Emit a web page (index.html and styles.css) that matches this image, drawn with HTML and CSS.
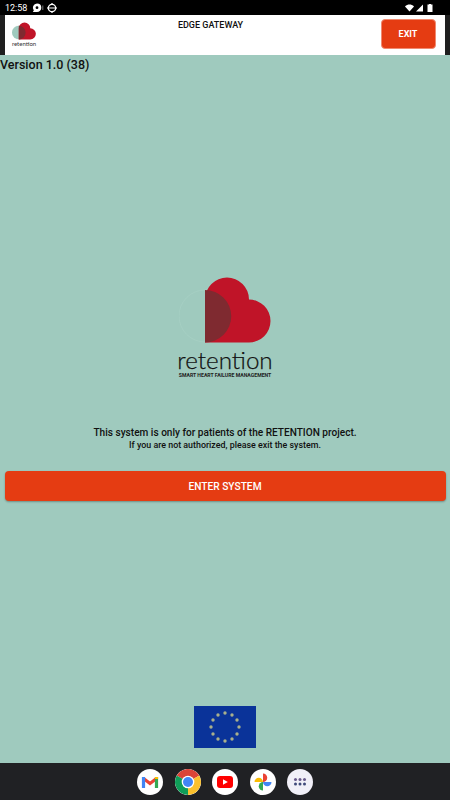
FILE: index.html
```html
<!DOCTYPE html>
<html lang="en">
<head>
<meta charset="utf-8">
<title>Edge Gateway</title>
<link rel="stylesheet" href="styles.css">
</head>
<body>
<svg class="defs" width="0" height="0" aria-hidden="true">
  <symbol id="heart" viewBox="0 0 92 66">
    <circle cx="26" cy="39" r="26" fill="#9fcabe" stroke="#a9d1c6" stroke-width=".6"/>
    <path d="M26 65.500V22.500A22 22 0 0 1 70 22.500A21.500 21.500 0 0 1 70 65.500Z" fill="#c01428"/>
    <path d="M26 13A26 26 0 0 1 26 65.500Z" fill="#7f2a30"/>
  </symbol>
</svg>
<div class="screen">
  <div class="status">
    <div class="status-left">
      <span class="time">12:58</span>
      <svg class="ic-chat" viewBox="0 0 12 10"><path d="M5 .5a4.300 4.300 0 0 1 4.300 4.200A4.300 4.300 0 0 1 5 9H.8l1-1.500A4.300 4.300 0 0 1 5 .5Z" fill="#fff"/><circle cx="5" cy="4.700" r="1.400" fill="#000"/><path d="M10.300 2.500h1v4.500h-1z" fill="#777"/></svg>
      <svg class="ic-sys" viewBox="0 0 10 10"><circle cx="5" cy="5" r="3.700" fill="none" stroke="#fff" stroke-width="1.300"/><path d="M1 5h8M5 0v1.500M5 8.500V10M0 5h1M9 5h1" stroke="#fff" stroke-width="1.200"/></svg>
    </div>
    <div class="status-right">
      <svg class="ic-wifi" viewBox="0 0 10 8"><path d="M0 2.200C3-.7 7-.7 10 2.200L5 8Z" fill="#fff"/></svg>
      <svg class="ic-signal" viewBox="0 0 8 8"><path d="M8 0V8H0Z" fill="#fff"/></svg>
      <svg class="ic-batt" viewBox="0 0 5 8"><path d="M1.500 0h2v.6H5V8H0V.6h1.500Z" fill="#fff"/></svg>
    </div>
  </div>
  <header class="topbar">
    <div class="brand">
      <svg class="brand-heart"><use href="#heart"/></svg>
      <span class="brand-name">retention</span>
    </div>
    <div class="title">EDGE GATEWAY</div>
    <button class="exit">EXIT</button>
  </header>
  <main class="main">
    <div class="version">Version 1.0 (38)</div>
    <div class="logo">
      <svg class="logo-heart"><use href="#heart"/></svg>
      <div class="logo-name">retention</div>
      <div class="logo-sub">SMART HEART FAILURE MANAGEMENT</div>
    </div>
    <p class="notice">This system is only for patients of the RETENTION project.</p>
    <p class="notice-sub">If you are not authorized, please exit the system.</p>
    <button class="enter">ENTER SYSTEM</button>
    <svg class="flag" viewBox="0 0 62 42">
      <rect width="62" height="42" fill="#0a3399"/>
      <g fill="#a9b08c">
        <circle cx="31" cy="7" r="1.700"/><circle cx="38" cy="9" r="1.700"/><circle cx="43" cy="14" r="1.700"/><circle cx="45" cy="21" r="1.700"/><circle cx="43" cy="28" r="1.700"/><circle cx="38" cy="33" r="1.700"/><circle cx="31" cy="35" r="1.700"/><circle cx="24" cy="33" r="1.700"/><circle cx="19" cy="28" r="1.700"/><circle cx="17" cy="21" r="1.700"/><circle cx="19" cy="14" r="1.700"/><circle cx="24" cy="9" r="1.700"/>
      </g>
    </svg>
  </main>
  <nav class="dock">
    <div class="app">
      <svg viewBox="0 0 26 26"><path d="M6.500 9.500 13 14.500 19.500 9.500" fill="none" stroke="#ea4335" stroke-width="3.200"/><path d="M6.500 19V8" stroke="#4285f4" stroke-width="3.200"/><path d="M19.500 19V8" stroke="#34a853" stroke-width="3.200"/><path d="M19.500 8v2" stroke="#fbbc04" stroke-width="3.200"/></svg>
    </div>
    <div class="app app-chrome">
      <svg viewBox="0 0 26 26"><path d="M13 13 1.700 6.500A13 13 0 0 1 24.300 6.500Z" fill="#db4437"/><path d="M13 13 1.700 6.500A13 13 0 0 0 13 26Z" fill="#0f9d58"/><path d="M13 13 24.300 6.500A13 13 0 0 1 13 26Z" fill="#fbc02d"/><circle cx="13" cy="13" r="6.300" fill="#fff"/><circle cx="13" cy="13" r="5" fill="#4285f4"/></svg>
    </div>
    <div class="app">
      <svg viewBox="0 0 26 26"><rect x="5" y="7" width="16" height="12" rx="3" fill="#f00"/><path d="M11 10.200v5.600l4.800-2.800Z" fill="#fff"/></svg>
    </div>
    <div class="app">
      <svg viewBox="0 0 26 26"><path d="M13 13H4.500A4.250 4.250 0 0 1 13 13Z" fill="#fbbc04"/><path d="M13 13V4.500A4.250 4.250 0 0 1 13 13Z" fill="#ea4335"/><path d="M13 13H21.500A4.250 4.250 0 0 1 13 13Z" fill="#4285f4"/><path d="M13 13V21.500A4.250 4.250 0 0 1 13 13Z" fill="#34a853"/></svg>
    </div>
    <div class="app app-grid">
      <svg viewBox="0 0 26 26"><g fill="#6a5a8c"><circle cx="8.500" cy="10.500" r="1.500"/><circle cx="13" cy="10.500" r="1.500"/><circle cx="17.500" cy="10.500" r="1.500"/></g><g fill="#3f4a7a"><circle cx="8.500" cy="15" r="1.500"/><circle cx="13" cy="15" r="1.500"/><circle cx="17.500" cy="15" r="1.500"/></g></svg>
    </div>
  </nav>
</div>
</body>
</html>
```
FILE: styles.css
```css
* { box-sizing: border-box; }
html, body { margin: 0; padding: 0; }
body { width: 450px; height: 800px; overflow: hidden; font-family: Roboto, "Liberation Sans", sans-serif; background: #9fcabe; }
.defs { position: absolute; }
.screen { width: 450px; height: 800px; display: flex; flex-direction: column; }

.status { height: 15px; flex: none; background: #000; display: flex; justify-content: space-between; align-items: center; padding: 0 17px 0 5px; color: #fff; }
.status-left, .status-right { display: flex; align-items: center; }
.time { font-size: 9px; width: 27px; }
.ic-chat { width: 12px; height: 10px; margin-right: 3px; }
.ic-sys { width: 10px; height: 10px; }
.ic-wifi { width: 9px; height: 8px; margin-right: 2px; }
.ic-signal { width: 7px; height: 8px; margin-right: 4px; }
.ic-batt { width: 6px; height: 8px; }

.topbar { height: 40px; flex: none; background: #fff; border-left: 5px solid #1f1f1f; border-right: 5px solid #1f1f1f; display: flex; align-items: flex-start; position: relative; padding-left: 7px; }
.brand { width: 24px; display: flex; flex-direction: column; align-items: center; padding-top: 7px; }
.brand-heart { width: 24px; height: 18px; display: block; }
.brand-name { font-family: Lato, sans-serif; font-size: 6px; line-height: 8px; color: #333; }
.title { position: absolute; left: 0; right: 29px; top: 5px; text-align: center; font-size: 9px; font-weight: 500; line-height: 11px; color: #111; }
.exit { position: absolute; right: 9.500px; top: 3.500px; width: 55px; height: 30px; border: 1px solid #f08a70; border-radius: 4px; background: #e53c12; color: #fff; font: 700 9px Roboto, sans-serif; padding: 0; }

.main { flex: 1; min-height: 0; display: flex; flex-direction: column; align-items: center; background: #9fcabe; }
.version { align-self: flex-start; font-size: 12.500px; font-weight: 500; line-height: 16px; margin-top: 2px; color: #111; }
.logo { margin-top: 204px; width: 94px; display: flex; flex-direction: column; align-items: center; }
.logo-heart { width: 92px; height: 66px; display: block; }
.logo-name { font-family: Lato, sans-serif; font-weight: 300; font-size: 24.200px; line-height: 20px; margin-top: 7px; color: #111; white-space: nowrap; -webkit-text-stroke: .25px #111; }
.logo-sub { font-size: 5.150px; font-weight: 700; line-height: 6px; margin-top: 2px; white-space: nowrap; color: #222; }
.notice { margin: 48px 0 0; font-size: 10.100px; font-weight: 500; line-height: 13px; color: #111; text-align: center; }
.notice-sub { margin: 0; font-size: 8.900px; font-weight: 500; line-height: 12px; color: #111; text-align: center; }
.enter { margin-top: 20px; width: 441px; height: 30px; flex: none; border: 0; border-radius: 4px; background: #e53c12; color: #fff; font: 500 10.200px Roboto, sans-serif; box-shadow: 0 1px 2px rgba(0,0,0,.3); padding: 0; }
.flag { width: 62px; height: 42px; flex: none; margin-top: 205px; }

.dock { height: 37px; flex: none; background: #202124; display: flex; justify-content: center; align-items: center; gap: 11.500px; }
.app { width: 26px; height: 26px; border-radius: 50%; background: #fff; overflow: hidden; }
.app svg { width: 26px; height: 26px; display: block; }
.app-grid { background: #f1f0f8; }
```
